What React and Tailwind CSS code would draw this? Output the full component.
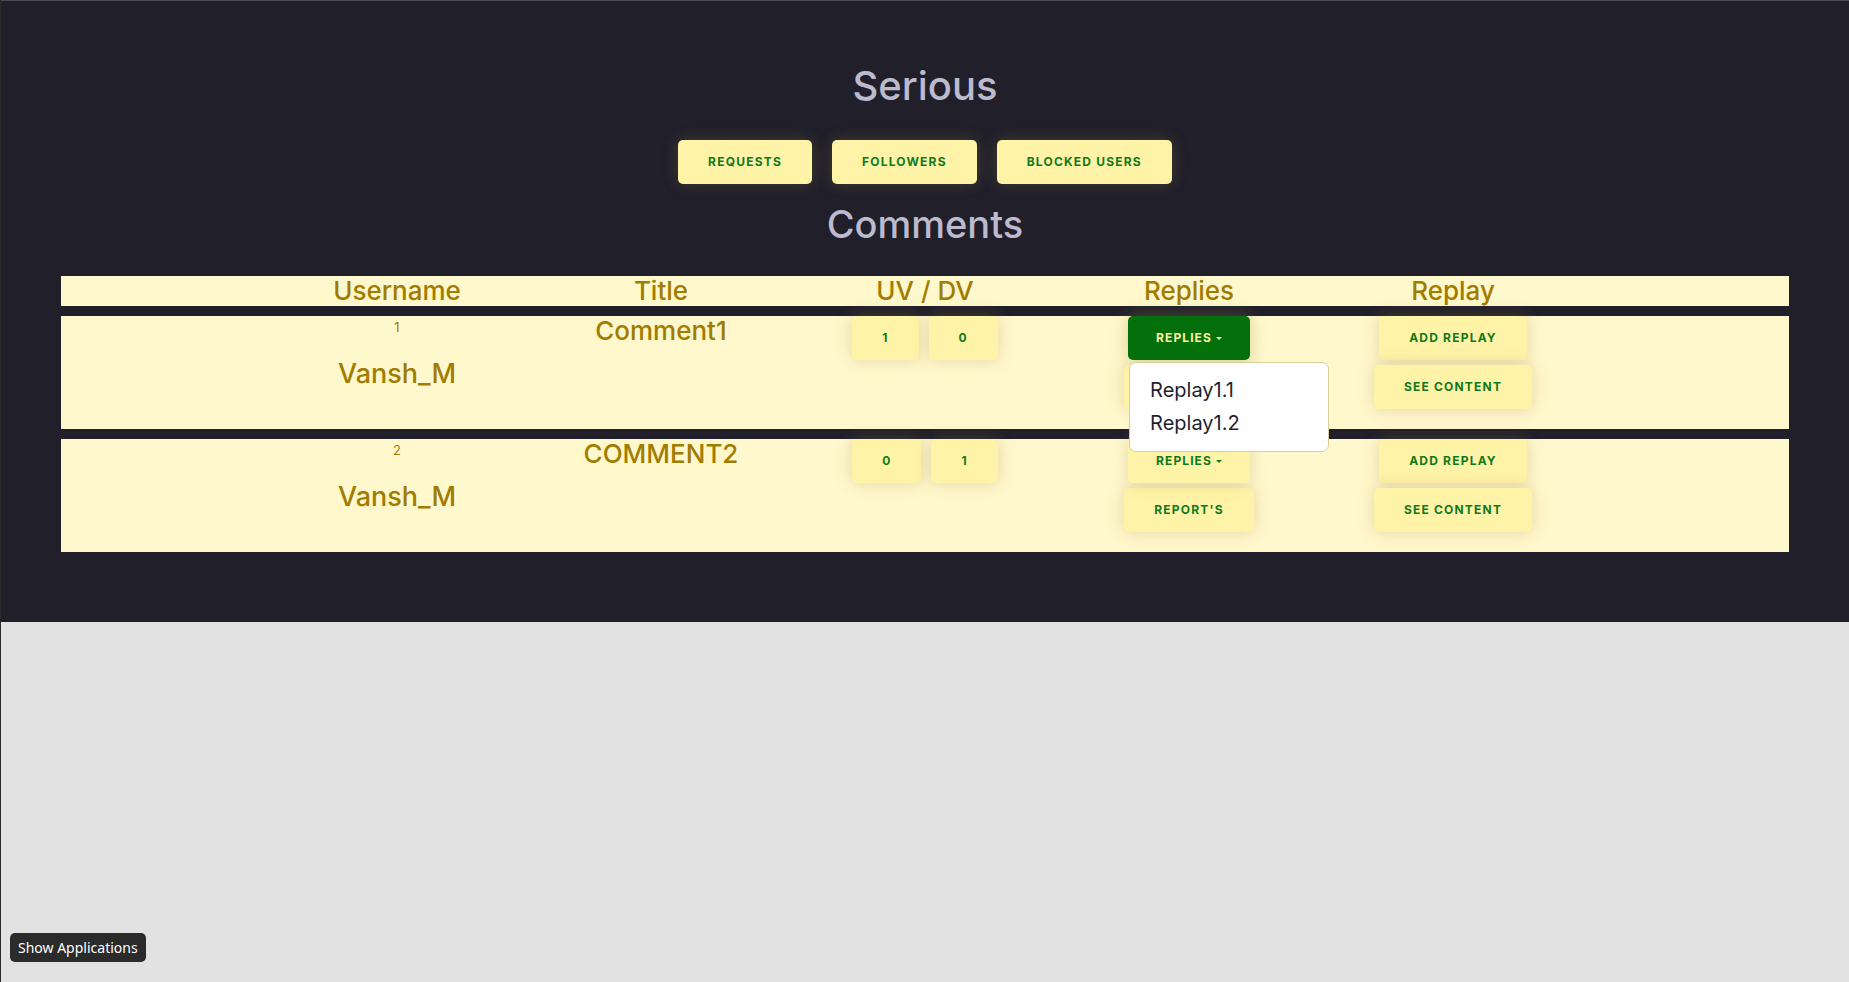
import React from 'react';

const font = { fontFamily: 'Inter, "Noto Sans", sans-serif' };

const Caret = () => (
  <svg width="6" height="4" viewBox="0 0 6 4" className="ml-[4px] mt-[2px]">
    <path d="M0 0h6L3 3z" fill="currentColor" />
  </svg>
);

const YellowBtn = ({ children, className = 'px-[30px]' }) => (
  <button
    className={`h-[44px] rounded-[5px] bg-[#fff3a8] text-[#0f7a1a] text-[12px] font-bold tracking-[0.1em] uppercase flex items-center justify-center shadow-[0_0_16px_rgba(160,140,70,0.3)] ${className}`}
  >
    {children}
  </button>
);

const CommentRow = ({ num, title, up, down, open }) => (
  <div className="h-[113px] bg-[#fff8cc] flex justify-center">
    <div className="w-[264px] flex flex-col items-center text-[#a17c00]">
      <span className="mt-[3px] text-[13px] leading-[16px]">{num}</span>
      <span className="mt-[23px] text-[27px] leading-[32px] font-medium">Vansh_M</span>
    </div>
    <div className="w-[264px] flex flex-col items-center text-[#a17c00]">
      <span className="text-[26px] leading-[30px] font-medium">{title}</span>
    </div>
    <div className="w-[264px] flex justify-center gap-[10px]">
      <YellowBtn>{up}</YellowBtn>
      <YellowBtn>{down}</YellowBtn>
    </div>
    <div className="w-[264px] flex flex-col items-center gap-[5px]">
      <div className="relative">
        {open ? (
          <button className="h-[44px] px-[28px] rounded-[5px] bg-[#03700c] text-[#fff2a0] text-[12px] font-bold tracking-[0.09em] flex items-center shadow-[0_0_16px_rgba(160,140,70,0.4)]">
            REPLIES
            <Caret />
          </button>
        ) : (
          <YellowBtn className="px-[28px] tracking-[0.09em]">
            REPLIES
            <Caret />
          </YellowBtn>
        )}
        {open && (
          <div className="absolute left-[1px] top-[46px] z-10 w-[200px] bg-white border border-[#d9cf98] rounded-[7px] py-[11px] px-[20px] text-[#1f1f2c] text-[20px]">
            <div className="leading-[33px]">Replay1.1</div>
            <div className="leading-[33px]">Replay1.2</div>
          </div>
        )}
      </div>
      <YellowBtn>REPORT'S</YellowBtn>
    </div>
    <div className="w-[264px] flex flex-col items-center gap-[5px]">
      <YellowBtn>ADD REPLAY</YellowBtn>
      <YellowBtn>SEE CONTENT</YellowBtn>
    </div>
  </div>
);

export default function App() {
  const headers = ['Username', 'Title', 'UV / DV', 'Replies', 'Replay'];

  return (
    <div className="relative w-full h-[982px] bg-[#e2e2e2] border-l border-[#2a2a2a] overflow-hidden" style={font}>
      <div className="bg-[#201f2a] border-t border-[#4e4e52] pt-[61px] pb-[70px] px-[60px]">
        <h1 className="text-center text-[40px] leading-[48px] font-medium text-[#bcbacf]">Serious</h1>

        <div className="mt-[30px] flex justify-center gap-[20px]">
          <YellowBtn>Requests</YellowBtn>
          <YellowBtn>Followers</YellowBtn>
          <YellowBtn>Blocked Users</YellowBtn>
        </div>

        <h2 className="mt-[17px] text-center text-[38px] leading-[46px] font-medium text-[#bcbacf]">Comments</h2>

        <div className="mt-[29px] h-[30px] bg-[#fff8cc] flex justify-center items-center">
          {headers.map((h) => (
            <div key={h} className="w-[264px] text-center text-[26px] leading-none font-medium text-[#a17c00]">
              {h}
            </div>
          ))}
        </div>

        <div className="mt-[10px] flex flex-col gap-[10px]">
          <CommentRow num="1" title="Comment1" up="1" down="0" open />
          <CommentRow num="2" title="COMMENT2" up="0" down="1" />
        </div>
      </div>

      <div
        className="absolute left-[9px] bottom-[20px] h-[29px] px-[8px] flex items-center rounded-[5px] bg-[#2b2b2b] text-white text-[14px]"
        style={{ fontFamily: '"Noto Sans", sans-serif' }}
      >
        Show Applications
      </div>
    </div>
  );
}
